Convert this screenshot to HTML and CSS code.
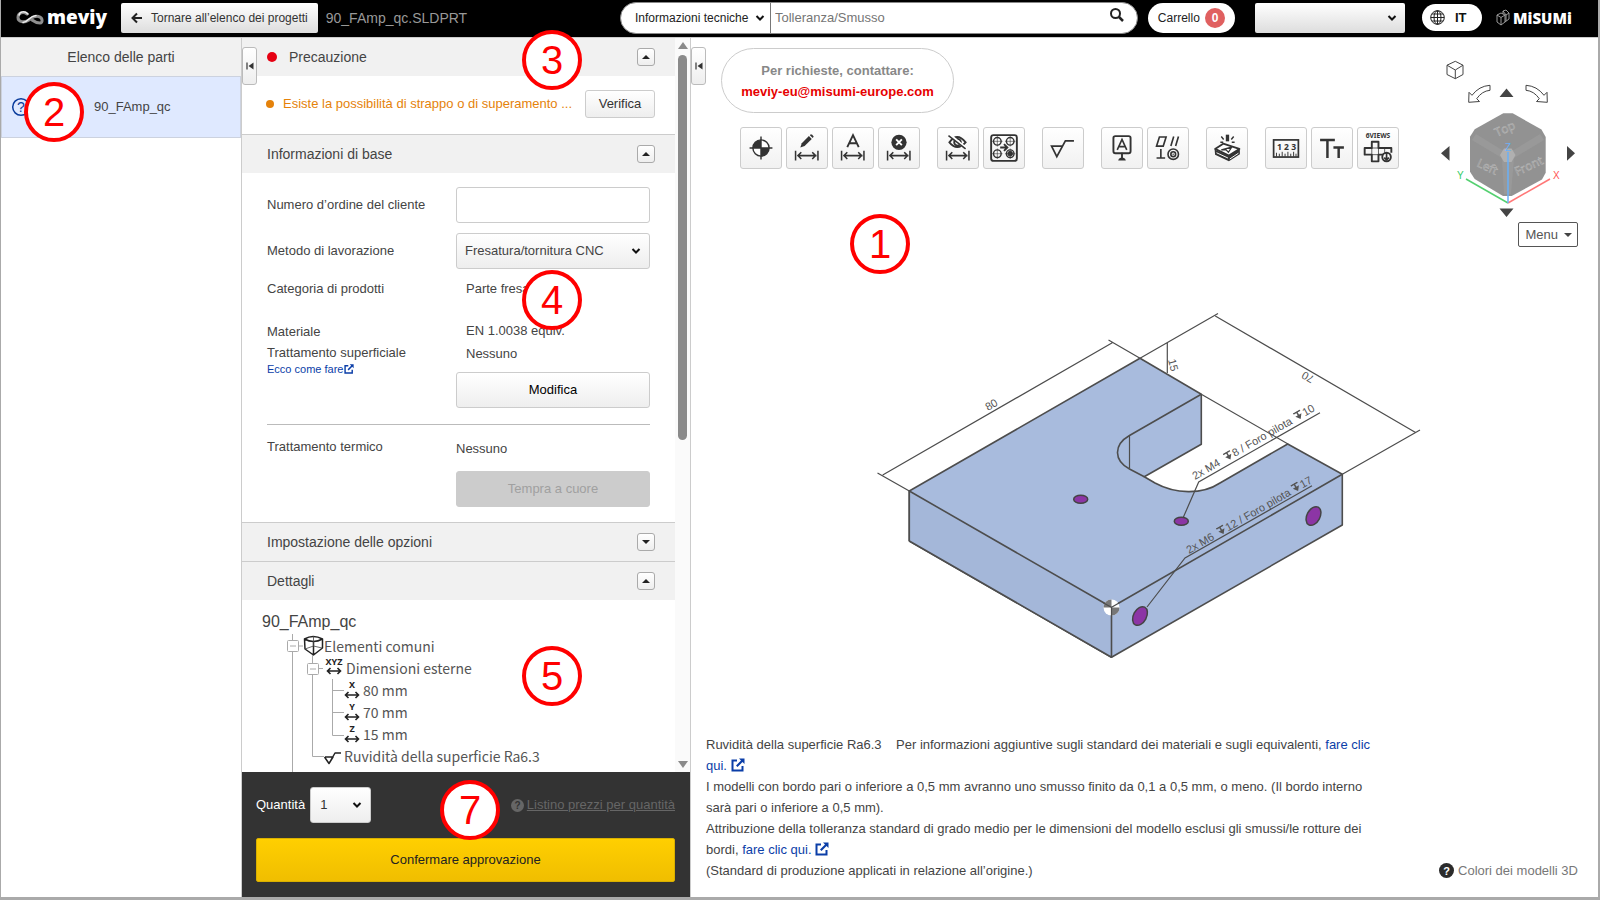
FILE: index.html
```html
<!DOCTYPE html>
<html lang="it">
<head>
<meta charset="utf-8">
<title>meviy – 90_FAmp_qc.SLDPRT</title>
<link rel="stylesheet" href="styles.css">
</head>
<body>
<svg class="defs" aria-hidden="true">
  <defs>
    <symbol id="ext" viewBox="0 0 14 14"><path d="M6 2.500H1.500V12.500H11.500V8" fill="none" stroke="currentColor" stroke-width="2"/><path d="M8 0.500H13.500V6L11.500 4L6.500 9L5 7.500L10 2.500Z" fill="currentColor"/></symbol>
    <symbol id="dim" viewBox="0 0 42 42"><path d="M9 24V34M32.500 24V34M11 29H31M15 25.500L11.500 29L15 32.500M26.500 25.500L30 29L26.500 32.500" fill="none" stroke="currentColor" stroke-width="1.600"/></symbol>
    <symbol id="span" viewBox="0 0 16 8"><path d="M1.500 4H14.500M4.500 1L1.500 4L4.500 7M11.500 1L14.500 4L11.500 7" fill="none" stroke="currentColor" stroke-width="1.600"/></symbol>
    <symbol id="collapse" viewBox="0 0 8 8"><path d="M1 0.500V7.500" stroke="currentColor" stroke-width="1.200"/><path d="M7.500 0.500V7.500L2.500 4Z" fill="currentColor"/></symbol>
    <symbol id="depth" viewBox="0 0 8 10"><path d="M0 1H8M4 1V6" stroke="currentColor" stroke-width="1.500"/><path d="M0.500 4.500H7.500L4 9Z" fill="currentColor"/></symbol>
  </defs>
</svg>

<header class="topbar">
  <a class="brand" href="#" aria-label="meviy">
    <svg width="29" height="16" viewBox="0 0 29 16" fill="none" stroke-linecap="round"><path d="M11 4C7 1 2 3 2 7.500S8 13 12 10.500S18 5.500 22.500 6.500S27 13 24 13S18 11.500 16 10" stroke="#8e8e8e" stroke-width="3"/><path d="M3 5C4 1 9 1 12 4M7 12.500C12 12.500 13 6 20 5.500" stroke="#eee" stroke-width="1.500"/></svg>
    <span>meviy</span>
  </a>
  <button class="back" type="button"><svg width="12" height="12" viewBox="0 0 12 12" fill="none" stroke="#222" stroke-width="2"><path d="M11 6H2M6 1.500L1.500 6L6 10.500"/></svg>Tornare all’elenco dei progetti</button>
  <span class="filename">90_FAmp_qc.SLDPRT</span>
  <form class="search">
    <select aria-label="Tipo di ricerca"><option>Informazioni tecniche</option></select>
    <input type="text" aria-label="Cerca" placeholder="Tolleranza/Smusso">
    <button type="button" aria-label="Cerca"><svg width="14" height="14" viewBox="0 0 14 14" fill="none" stroke="#222" stroke-width="2"><circle cx="5.500" cy="5.500" r="4.500"/><path d="M9 9L13 13" stroke-width="2.500"/></svg></button>
  </form>
  <button class="cart" type="button">Carrello <span>0</span></button>
  <select class="account" aria-label="Account"><option></option></select>
  <button class="lang" type="button"><svg width="15" height="15" viewBox="0 0 15 15" fill="none" stroke="#222"><circle cx="7.500" cy="7.500" r="6.800"/><ellipse cx="7.500" cy="7.500" rx="3.500" ry="6.800"/><path d="M7.500 0.700V14.300M0.700 7.500H14.300M2 4H13M2 11H13"/></svg>IT</button>
  <a class="misumi" href="#" aria-label="MiSUMi">
    <svg width="14" height="17" viewBox="0 0 14 17" fill="none" stroke="#aaa" stroke-width="0.900"><path d="M1 6L5 4L9 6V13L5 16L1 13ZM1 6L5 8.500L9 6M5 8.500V16M7 5V2L10 1L13 4V10L9 13M7 2L10 6L13 4M10 6V12"/></svg>
    <span>MiSUMi</span>
  </a>
</header>

<main class="workspace">
  <aside class="parts">
    <h2>Elenco delle parti</h2>
    <a class="part" href="#">
      <svg width="20" height="20" viewBox="0 0 20 20"><circle cx="10" cy="10" r="8.300" fill="none" stroke="#0a3c9c" stroke-width="1.500"/><text x="10" y="15" text-anchor="middle" class="help-glyph">?</text></svg>
      <span>90_FAmp_qc</span>
    </a>
    <b class="pin pin-2">2</b>
  </aside>

  <section class="panel">
    <button class="tab" type="button" aria-label="Comprimi elenco"><svg width="8" height="8"><use href="#collapse"/></svg></button>
    <div class="scroller">
      <div class="sections">
        <h2 class="bar alert"><span class="dot red"></span>Precauzione<button type="button" class="fold" aria-label="Comprimi"></button></h2>
        <div class="warning">
          <span class="dot orange"></span>
          <p>Esiste la possibilità di strappo o di superamento ...</p>
          <button type="button" class="btn small">Verifica</button>
        </div>
        <h2 class="bar">Informazioni di base<button type="button" class="fold" aria-label="Comprimi"></button></h2>
        <div class="form">
          <div class="row">
            <label for="order">Numero d’ordine del cliente</label>
            <input id="order" type="text">
          </div>
          <div class="row">
            <label for="method">Metodo di lavorazione</label>
            <select id="method"><option>Fresatura/tornitura CNC</option></select>
          </div>
          <div class="row">
            <span>Categoria di prodotti</span><span class="value">Parte fresata</span>
          </div>
          <div class="row top material">
            <div>
              <p>Materiale</p>
              <p>Trattamento superficiale</p>
              <a href="#">Ecco come fare<svg width="10" height="10"><use href="#ext"/></svg></a>
            </div>
            <div class="stack">
              <span class="value">EN 1.0038 equiv.</span>
              <span class="value">Nessuno</span>
              <button type="button" class="btn dark">Modifica</button>
            </div>
          </div>
          <hr>
          <div class="row top heat">
            <span>Trattamento termico</span>
            <div class="stack">
              <span>Nessuno</span>
              <button type="button" class="btn" disabled>Tempra a cuore</button>
            </div>
          </div>
        </div>
        <h2 class="bar">Impostazione delle opzioni<button type="button" class="fold down" aria-label="Espandi"></button></h2>
        <h2 class="bar">Dettagli<button type="button" class="fold" aria-label="Comprimi"></button></h2>
        <div class="tree">
          <h3>90_FAmp_qc</h3>
          <ul>
            <li><svg width="62" height="22" viewBox="0 0 62 22" fill="none"><path class="wire" d="M30.500 -1V140M36 11H41"/><rect class="wire box" x="25.500" y="5.500" width="11" height="11" rx="1"/><path class="wire" d="M28 11H34"/><path class="ink" d="M42.500 4Q51 -1 60.500 4V13L51.500 20L43 14ZM42.500 4Q47 6.500 51.500 6.500Q56 6.500 60.500 4M51.500 6.500V20"/><path class="fine" d="M51.500 1V11L43 14M51.500 11L60 13"/></svg>Elementi comuni</li>
            <li><svg width="84" height="22" viewBox="0 0 84 22" fill="none"><path class="wire" d="M50.500 -2V99.500M56 11.500H61"/><rect class="wire box" x="45.500" y="6.500" width="11" height="11" rx="1"/><path class="wire" d="M48 12H54"/><text x="72" y="8" text-anchor="middle" class="axis">XYZ</text><use href="#span" x="64" y="10" width="16" height="8"/></svg>Dimensioni esterne</li>
            <li><svg width="101" height="22" viewBox="0 0 101 22" fill="none"><path class="wire" d="M70.500 0V56.500M70.500 11.500H82"/><text x="90" y="9" text-anchor="middle" class="axis">X</text><use href="#span" x="82" y="12" width="16" height="8"/></svg>80 mm</li>
            <li><svg width="101" height="22" viewBox="0 0 101 22" fill="none"><path class="wire" d="M70.500 11.500H82"/><text x="90" y="9" text-anchor="middle" class="axis">Y</text><use href="#span" x="82" y="12" width="16" height="8"/></svg>70 mm</li>
            <li><svg width="101" height="22" viewBox="0 0 101 22" fill="none"><path class="wire" d="M70.500 12.500H82"/><text x="90" y="9" text-anchor="middle" class="axis">Z</text><use href="#span" x="82" y="12" width="16" height="8"/></svg>15 mm</li>
            <li><svg width="82" height="22" viewBox="0 0 82 22" fill="none"><path class="wire" d="M50.500 11.500H62"/><path class="ink" d="M63 12H71L67 18.500L62.500 12M67 18.500L73 8H79"/></svg>Ruvidità della superficie Ra6.3</li>
          </ul>
        </div>
      </div>
      <div class="scrollbar" aria-hidden="true"><i class="up"></i><i class="thumb"></i><i class="down"></i></div>
    </div>
    <footer class="order">
      <div class="qty">
        <label for="qty">Quantità</label>
        <select id="qty"><option>1</option></select>
        <a href="#"><svg width="13" height="13" viewBox="0 0 13 13"><circle cx="6.500" cy="6.500" r="6.500" fill="#666"/><text x="6.500" y="10" text-anchor="middle" class="q-dark">?</text></svg><span>Listino prezzi per quantità</span></a>
      </div>
      <button type="button" class="confirm">Confermare approvazione</button>
    </footer>
    <b class="pin pin-3">3</b>
    <b class="pin pin-4">4</b>
    <b class="pin pin-5">5</b>
    <b class="pin pin-7">7</b>
  </section>

  <section class="viewer">
    <svg class="model" viewBox="691 38 907 859" aria-label="Modello 3D">
      <path class="edge" fill="#a8bbdd" d="M1140 358.300L1201.300 394.300V444.300L1144.300 476.700L1155 483C1175 494 1202 495 1220 483L1287.700 444L1342.300 474.300V525L1111.500 657.300L909.300 541V491Z"/>
      <path fill="#a4b7d9" d="M909.300 491L1111.500 607.300V657.300L909.300 541Z"/>
      <path class="edge" fill="none" d="M909.300 541V491L1111.500 607.300L1342.300 474.300M1111.500 607.300V657.300L909.300 541M1201.300 394.300L1129.500 435.500C1113 445 1114 461 1129.500 469L1144.300 476.700"/>
      <path class="thin" d="M1129.500 435.500V468M1201.300 394.300L1288 444M882.700 475L1112.300 342.700M877.500 473L909.300 491M1108.500 340L1140 358.300M1140 358.300L1218 313.500M1215.300 316L1416 432.700M1342.300 474.300L1420 430M1167.300 342.700V373M1320 412.700L1198.700 482L1183 518M1312 485.700L1185 558L1147 607"/>
      <g class="hole"><ellipse cx="1080.700" cy="499.300" rx="7" ry="4"/><ellipse cx="1181.300" cy="521.300" rx="7" ry="4"/><ellipse cx="1140" cy="616" rx="6.500" ry="10" transform="rotate(28 1140 616)"/><ellipse cx="1313.500" cy="516" rx="6.500" ry="10" transform="rotate(28 1313.500 516)"/></g>
      <circle cx="1111.500" cy="607.500" r="8" fill="#fff"/><path fill="#777" d="M1111.500 607.500V599.500A8 8 0 0 0 1103.500 607.500ZM1111.500 607.500V615.500A8 8 0 0 0 1119.500 607.500Z"/>
      <path class="thin" d="M1103.500 603L1111.500 607.300L1119 603M1111.500 607V616"/>
      <g class="note-text">
        <text transform="translate(988 411) rotate(-30)">80</text>
        <text transform="translate(1315 377) rotate(210)">70</text>
        <text transform="translate(1168 360) rotate(75)">15</text>
        <g transform="translate(1195 480) rotate(-30)"><text>2x M4</text><use href="#depth" x="37" y="-9" width="8" height="10"/><text x="46">8 / Foro pilota</text><use href="#depth" x="118" y="-9" width="8" height="10"/><text x="127">10</text></g>
        <g transform="translate(1189 554) rotate(-30)"><text>2x M6</text><use href="#depth" x="36" y="-9" width="8" height="10"/><text x="45">12 / Foro pilota</text><use href="#depth" x="122" y="-9" width="8" height="10"/><text x="131">17</text></g>
      </g>
    </svg>
    <button class="tab" type="button" aria-label="Comprimi pannello"><svg width="8" height="8"><use href="#collapse"/></svg></button>
    <div class="contact">Per richieste, contattare:<a href="mailto:meviy-eu@misumi-europe.com">meviy-eu@misumi-europe.com</a></div>
    <div class="toolbar">
      <div class="group">
        <button type="button" aria-label="Origine"><svg viewBox="0 0 42 42"><circle cx="21" cy="21" r="8.500" fill="#fff" stroke="currentColor" stroke-width="1.500"/><path d="M21 21V12.500A8.500 8.500 0 0 0 12.500 21ZM21 21V29.500A8.500 8.500 0 0 0 29.500 21Z" fill="currentColor"/><path d="M21 9V33M9 21H33" stroke="currentColor" stroke-width="1.500"/></svg></button>
        <button type="button" aria-label="Modifica quota"><svg viewBox="0 0 42 42"><use href="#dim"/><path d="M14 20.500L15.500 16L23 8.500L26 11.500L18.500 19Z" fill="currentColor"/><path d="M24 7.500L25 6.500Q26.500 6.500 28 9L27 10.500Z" fill="currentColor"/></svg></button>
        <button type="button" aria-label="Testo quota"><svg viewBox="0 0 42 42"><use href="#dim"/><path d="M15 20L21 7.500L27 20M17 16H25" fill="none" stroke="currentColor" stroke-width="2"/></svg></button>
        <button type="button" aria-label="Elimina quota"><svg viewBox="0 0 42 42"><use href="#dim"/><circle cx="21" cy="15" r="8" fill="currentColor"/><path d="M18 12L24 18M24 12L18 18" stroke="#fff" stroke-width="2"/></svg></button>
      </div>
      <div class="group">
        <button type="button" aria-label="Nascondi quota"><svg viewBox="0 0 42 42"><use href="#dim"/><path d="M12 15Q20 4 29 15Q20 25 12 15Z" fill="none" stroke="currentColor" stroke-width="2"/><circle cx="20.500" cy="15" r="3.500" fill="none" stroke="currentColor" stroke-width="2"/><path d="M12 7L30 22" stroke="#fff" stroke-width="3"/><path d="M11 8L29 22" stroke="currentColor" stroke-width="1.600"/></svg></button>
        <button type="button" aria-label="Fori"><svg viewBox="0 0 42 42" fill="none" stroke="currentColor"><rect x="7.500" y="7.500" width="27" height="27" rx="2.500" stroke-width="2"/><g stroke-width="1.500"><circle cx="14" cy="14" r="4"/><circle cx="27.500" cy="14" r="4"/><circle cx="14" cy="27" r="4"/><circle cx="27.500" cy="27" r="4"/></g><circle cx="27.500" cy="27" r="2.500" fill="currentColor"/><path d="M14 8.500V19.500M8.500 14H19.500M27.500 8.500V19.500M22 14H33M14 21.500V32.500M8.500 27H19.500M27.500 21.500V32.500M22 27H33" stroke-width="0.600"/><path d="M17 20.500H24M21 17L24.500 20.500L21 24" stroke-width="2"/></svg></button>
      </div>
      <div class="group">
        <button type="button" aria-label="Rugosità"><svg viewBox="0 0 42 42"><path d="M21 19H9L14.500 30L23.500 13.500H32.500" fill="none" stroke="currentColor" stroke-width="1.800"/></svg></button>
      </div>
      <div class="group">
        <button type="button" aria-label="Riferimento"><svg viewBox="0 0 42 42"><rect x="12" y="8.500" width="18" height="18" rx="2" fill="none" stroke="currentColor" stroke-width="2"/><path d="M16 23L21 12L26 23M18 19.500H24" fill="none" stroke="currentColor" stroke-width="1.700"/><path d="M21 26V33" stroke="currentColor" stroke-width="2"/><path d="M17 34Q18 31 21 31Q24 31 25 34Z" fill="currentColor"/></svg></button>
        <button type="button" aria-label="Tolleranze geometriche"><svg viewBox="0 0 42 42" fill="none" stroke="currentColor" stroke-width="1.700"><path d="M9 19L12 9.500H19L16 19ZM24 19L27 9M29 19L32 9M9 31.500H18M13.500 22V31.500"/><circle cx="26.500" cy="27.500" r="5.500"/><circle cx="26.500" cy="27.500" r="2.500"/><path d="M26.500 27V28"/></svg></button>
      </div>
      <div class="group">
        <button type="button" aria-label="Marcatura"><svg viewBox="0 0 42 42"><path d="M8.500 22L17 16.500L34 22L23 29Z" fill="#fff" stroke="currentColor" stroke-width="2" stroke-linejoin="round"/><path d="M8 22.500L23 29.500V35L8.500 28ZM23 29.500L34.500 22V27.500L23 35Z" fill="currentColor"/><path d="M24 32.500L33 26.500M10 26L22 31.500" stroke="#fff"/><path d="M15 23L26 20L22.500 25.500L20 23Z" fill="none" stroke="currentColor" stroke-width="1.300"/><path d="M21.500 7V14" stroke="currentColor" stroke-width="3.500"/><path d="M15 9L17.500 12M14 15H17M28 9L25.500 12M29 15H26" stroke="currentColor" stroke-width="1.500"/></svg></button>
      </div>
      <div class="group">
        <button type="button" aria-label="Righello"><svg viewBox="0 0 42 42"><rect x="8" y="12.500" width="26" height="18" fill="none" stroke="currentColor" stroke-width="1.800"/><text x="21.500" y="23.500" text-anchor="middle" class="ruler-text">1 2 3</text><path d="M11 30V26M14 30V27M17 30V25M20 30V27M23 30V25M26 30V27M29 30V25M31.500 30V27" stroke="currentColor"/></svg></button>
        <button type="button" aria-label="Dimensione testo"><svg viewBox="0 0 42 42"><path d="M8.500 12.500H24M16.200 12V31.500M22.500 20.500H33.500M28 20.500V31.500" stroke="currentColor" stroke-width="2.600"/></svg></button>
        <button type="button" aria-label="6 viste"><svg viewBox="0 0 42 42" fill="none" stroke="currentColor"><text x="21" y="11" text-anchor="middle" class="views-text">6VIEWS</text><path d="M35 26V21H21.500V14.500H14.500V21H7V28H14.500V35H21.500V28H27" stroke-width="2" stroke-linejoin="round"/><path d="M14.500 21V28M21.500 28V21M14.500 21H21.500M14.500 28H21.500M28 21V26" stroke-width="0.800"/><circle cx="30" cy="30.500" r="4.500" fill="#fff" stroke-width="2"/><path d="M30 26V33M27.500 31L30 33.500L32.500 31" stroke-width="1.800"/></svg></button>
      </div>
    </div>
    <b class="pin pin-1">1</b>
    <div class="nav">
      <svg width="140" height="162" viewBox="1438 58 140 162">
        <g fill="#fff" stroke="#444"><path d="M1455.300 61.300L1463 65.200V74.500L1455.300 78.700L1447 74.500V65.200ZM1447 65.200L1455.300 70L1463 65.200M1455.300 70V78.700"/>
        <path id="spin" d="M1490 85.300V90.300Q1482 91 1476.700 98.700L1479.500 101.500L1468.700 102.300L1469 92.300L1472 95.300Q1479 86 1490 85.300Z"/><use href="#spin" transform="translate(3016 0) scale(-1 1)"/></g>
        <path fill="#444" d="M1499.500 97L1513.500 97L1506.500 88.500ZM1441 153.300L1449.500 146V160.700ZM1575 153.300L1567 146V160.700ZM1499.500 208.500H1513.500L1506.500 217Z"/>
        <path fill="#929292" d="M1503.300 113.300H1512.700L1541.500 129.500L1545.700 137V172.700L1542 179.500L1511.700 196H1503L1474.700 179L1470 171.700V136.700L1474.700 129.300Z"/>
        <path fill="#999" d="M1476 134L1502 150L1514 150L1540 134L1544 140L1514 158L1511 194H1504L1502 158L1472 140Z"/>
        <path fill="#b0b0b0" d="M1504 148.500H1511.500L1515.500 155L1511.500 162H1504L1500 155Z"/>
        <g class="cube-text"><text transform="translate(1497 137) rotate(-25)">Top</text><text transform="translate(1476 166) rotate(25)">Left</text><text transform="translate(1517 176) rotate(-25)">Front</text></g>
        <g fill="none" stroke-width="1.500"><path stroke="#54d070" d="M1508 203L1466 179"/><path stroke="#f77" d="M1508 203L1550 179"/><path stroke="#6ab0f7" d="M1508 203V152"/></g>
        <g class="axes"><text x="1457" y="179" fill="#3c6">Y</text><text x="1553" y="179" fill="#f55">X</text><text x="1505" y="151" fill="#6ab0f7">Z</text></g>
      </svg>
      <button type="button" class="menu">Menu<i></i></button>
    </div>
    <div class="notes">
      <div>
        <p>Ruvidità della superficie Ra6.3 &nbsp;&nbsp; Per informazioni aggiuntive sugli standard dei materiali e sugli equivalenti, <a href="#">fare clic qui. <svg width="14" height="14"><use href="#ext"/></svg></a></p>
        <p>I modelli con bordo pari o inferiore a 0,5 mm avranno uno smusso finito da 0,1 a 0,5 mm, o meno. (Il bordo interno sarà pari o inferiore a 0,5 mm).</p>
        <p>Attribuzione della tolleranza standard di grado medio per le dimensioni del modello esclusi gli smussi/le rotture dei bordi, <a href="#">fare clic qui. <svg width="14" height="14"><use href="#ext"/></svg></a></p>
        <p>(Standard di produzione applicati in relazione all’origine.)</p>
      </div>
      <a class="colors" href="#"><svg width="15" height="15" viewBox="0 0 15 15"><circle cx="7.500" cy="7.500" r="7.500" fill="#2b2b2b"/><text x="7.500" y="11.500" text-anchor="middle" class="q-light">?</text></svg>Colori dei modelli 3D</a>
    </div>
  </section>
</main>
</body>
</html>
```
FILE: styles.css
```css
* { box-sizing: border-box; }
body {
  margin: 0;
  height: 100vh;
  display: flex;
  flex-direction: column;
  overflow: hidden;
  background: #fff;
  border: solid #aaa;
  border-width: 0 2px 3px 1px;
  font: 13px/20px "Liberation Sans", Arial, sans-serif;
  color: #333;
}
.defs { position: absolute; width: 0; height: 0; }
h2, h3, p, ul { margin: 0; padding: 0; font-weight: 400; list-style: none; }
button, select, input { font: inherit; color: inherit; margin: 0; }
a { color: #0b3ea8; text-decoration: none; }
svg { flex: none; }
select {
  --chevron: url("data:image/svg+xml,%3Csvg xmlns='http://www.w3.org/2000/svg' width='10' height='8'%3E%3Cpath d='M1.500 2L5 5.500L8.500 2' fill='none' stroke='%23111' stroke-width='2'/%3E%3C/svg%3E") no-repeat right 8px center;
  appearance: none;
}

.topbar {
  display: flex;
  align-items: center;
  height: 38px;
  flex: none;
  padding: 0 28px 2px 15px;
  background: #000;
  border-bottom: 1px solid #ccc;
}
.brand { display: flex; align-items: center; width: 105px; gap: 2px; color: #fff; font: 800 19px/24px "Open Sans", sans-serif; }
.brand span { padding-bottom: 2px; }
.back {
  display: flex;
  align-items: center;
  gap: 8px;
  height: 30px;
  padding: 0 10px;
  border: 0;
  border-radius: 2px;
  background: linear-gradient(#fff, #ddd);
  font-size: 12px;
  white-space: nowrap;
}
.filename { margin: 0 auto 0 8px; font-size: 14px; color: #999; }
.search {
  display: flex;
  width: 518px;
  height: 32px;
  border: 1px solid #888;
  border-radius: 16px;
  background: #fff;
  overflow: hidden;
}
.search select { width: 150px; padding-left: 14px; border: 0; border-right: 1px solid #777; background: var(--chevron); background-position: right 5px center; color: #222; font-size: 12px; }
.search input { flex: 1; min-width: 0; border: 0; padding: 0 4px; background: none; }
.search input::placeholder { color: #757575; }
.search button { width: 40px; border: 0; background: none; }
.cart { width: 87px; height: 30px; margin-left: 10px; padding: 0; border: 0; border-radius: 15px; background: #fff; color: #222; font-size: 12px; }
.cart span { display: inline-block; width: 20px; margin-left: 2px; border-radius: 10px; background: #e06060; color: #fff; font-weight: 700; }
.account { width: 150px; height: 30px; margin: 0 17px 0 20px; padding: 0 6px; border: 0; border-radius: 2px; background: var(--chevron), linear-gradient(#fff, #ddd); }
.lang { display: flex; align-items: center; gap: 10px; width: 60px; height: 27px; padding: 0 8px; border: 0; border-radius: 14px; background: #fff; color: #111; font-weight: 700; }
.misumi { display: flex; align-items: center; gap: 3px; width: 74px; margin-left: 14px; color: #fff; font: 800 15px/20px "Open Sans", sans-serif; }

.workspace { flex: 1; min-height: 0; display: grid; grid-template-columns: 241px 449px minmax(0, 1fr); }
.parts { position: relative; border-right: 1px solid #ccc; }
.parts h2 { height: 38px; font-size: 14px; line-height: 38px; text-align: center; background: #f1f1f1; color: #444; }
.part { display: flex; align-items: center; gap: 63px; height: 62px; padding-left: 9px; border: 1px solid #ccd2df; background: #dfe9ff; color: #444; }
.help-glyph { font: 14px "Liberation Sans", sans-serif; fill: #0a3c9c; }

.panel { position: relative; display: flex; flex-direction: column; min-height: 0; border-right: 1px solid #ccc; }
.tab {
  position: absolute;
  z-index: 2;
  left: 0;
  top: 9px;
  width: 15px;
  height: 38px;
  padding: 0;
  border: 1px solid #bbb;
  border-radius: 3px;
  background: linear-gradient(#fff, #eee);
}
.scroller { flex: 1; min-height: 0; display: flex; overflow: hidden; }
.sections { flex: 1; overflow: hidden; }
.bar {
  display: flex;
  align-items: center;
  height: 39px;
  padding: 0 20px 0 25px;
  border-top: 1px solid #ccc;
  background: #f1f1f1;
  font-size: 14px;
  color: #444;
}
.bar.alert { height: 38px; border-top: 0; }
.bar .dot { margin-right: 12px; }
.fold { width: 18px; height: 18px; margin-left: auto; padding: 0; border: 1px solid #aaa; border-radius: 3px; background: linear-gradient(#fff, #eee); display: grid; place-items: center; }
.fold::before { content: ""; border: 4px solid transparent; border-top: 0; border-bottom: 4px solid #222; }
.fold.down::before { border-top: 4px solid #222; border-bottom: 0; }
.dot { width: 10px; height: 10px; border-radius: 5px; }
.red { background: #e60012; }
.orange { background: #e5820a; width: 8px; height: 8px; }
.warning { display: flex; align-items: center; height: 58px; padding: 0 20px 2px 24px; color: #e5820a; }
.warning p { flex: 1; padding-left: 9px; white-space: nowrap; }
.btn { height: 36px; width: 100%; border: 1px solid #ccc; border-radius: 3px; background: linear-gradient(#fff, #eee); }
.btn.small { width: 70px; height: 28px; padding: 0; color: #333; }
.btn.dark { color: #000; margin-top: 5px; }
.btn:disabled { margin-top: 12px; background: #ccc; color: #a0a0a0; }
.form { padding: 14px 25px 15px; color: #444; }
.row { display: grid; grid-template-columns: 189px 1fr; align-items: center; margin-bottom: 10px; }
.row input { height: 36px; min-width: 0; border: 1px solid #ccc; border-radius: 3px; }
.row select { height: 36px; min-width: 0; border: 1px solid #ccc; border-radius: 3px; padding: 0 8px; background: var(--chevron), linear-gradient(#fff, #eee); }
.row .value { padding-left: 10px; }
.row.top { align-items: start; }
.row.material { margin: 22px 0 16px; line-height: 21px; }
.row.material a { display: flex; align-items: center; gap: 1px; font-size: 11px; line-height: 12px; }
.stack { display: flex; flex-direction: column; gap: 3px; line-height: 20px; }
.row.heat { margin: 12px 0 0; }
.heat .stack { padding-top: 2px; gap: 0; }
hr { margin: 0; border: 0; border-top: 1px solid #bbb; }

.tree { padding: 9px 20px 0; }
.tree h3 { font-size: 16px; line-height: 26px; color: #444; }
.tree li { display: flex; align-items: center; height: 22px; font: 14px/22px "Noto Sans CJK JP", "Noto Sans", sans-serif; color: #555; white-space: nowrap; }
.tree svg { overflow: visible; color: #222; }
.wire { stroke: #aaa; }
.box { fill: #fff; }
.ink { stroke: #222; stroke-width: 1.500; stroke-linejoin: round; }
.fine { stroke: #444; stroke-width: 0.800; }
.axis { font: 700 9px "Noto Sans", sans-serif; fill: #222; }

.scrollbar { width: 15px; display: flex; flex-direction: column; align-items: center; padding: 4px 0; background: #fafafa; }
.scrollbar .up { border: 5px solid transparent; border-top: 0; border-bottom: 7px solid #8a8a8a; }
.thumb { width: 9px; height: 53%; margin: 6px 0 auto; border-radius: 5px; background: #8a8a8a; }
.scrollbar .down { border: 5px solid transparent; border-bottom: 0; border-top: 7px solid #8a8a8a; }

.order { padding: 15px 15px 15px 14px; background: #333; color: #fff; }
.qty { display: flex; align-items: center; margin-bottom: 15px; }
.qty select { width: 61px; height: 36px; margin-left: 5px; padding: 0 9px; border: 1px solid #ccc; border-radius: 3px; background: var(--chevron), linear-gradient(#fff, #eee); color: #333; }
.qty a { display: flex; align-items: center; gap: 3px; margin-left: auto; color: #666; }
.qty a span { text-decoration: underline; }
.q-dark { font: 700 10px "Liberation Sans", sans-serif; fill: #333; }
.q-light { font: 700 11px "Liberation Sans", sans-serif; fill: #fff; }
.confirm { display: block; width: 100%; height: 44px; border: 1px solid #d9b000; border-radius: 2px; background: linear-gradient(#ffcf00, #f0be00); color: #222; }

.viewer { position: relative; display: flex; flex-direction: column; align-items: flex-start; }
.model { position: absolute; inset: 0; width: 100%; height: 100%; }
.edge { stroke: #4d4d4d; stroke-width: 1.600; stroke-linejoin: round; }
.thin { fill: none; stroke: #4d4d4d; stroke-width: 1.200; }
.hole { fill: #8c35a5; stroke: #444; stroke-width: 1.500; }
.note-text { font: 11px "Liberation Sans", sans-serif; fill: #555; color: #555; }
.contact {
  position: relative;
  margin: 10px 0 14px 30px;
  width: 233px;
  padding: 11px 0 10px;
  border: 1px solid #ccc;
  border-radius: 33px;
  text-align: center;
  line-height: 21px;
  font-weight: 700;
  color: #888;
}
.contact a { display: block; color: #e60000; }
.toolbar { position: relative; display: flex; gap: 17px; margin-left: 49px; }
.group { display: flex; gap: 4px; }
.group button { width: 42px; height: 42px; padding: 0; border: 1px solid #ccc; border-radius: 3px; background: linear-gradient(#fff, #f1f1f1); color: #333; }
.group svg { display: block; width: 40px; height: 40px; }
.ruler-text { font: 700 9px "Noto Sans", sans-serif; fill: #333; stroke: none; }
.views-text { font: 700 7px "Noto Sans", sans-serif; fill: #333; stroke: none; }
.nav { position: absolute; top: 20px; right: 20px; display: flex; flex-direction: column; align-items: flex-end; gap: 2px; }
.cube-text { font: 12px "Open Sans", sans-serif; fill: #8a8a8a; stroke: #bbb; stroke-width: 0.500; }
.axes { font: 10px "Liberation Sans", sans-serif; }
.menu { display: flex; align-items: center; gap: 6px; height: 25px; padding: 0 5px 0 6px; border: 1px solid #555; border-radius: 2px; background: #fff; color: #555; }
.menu i { border: 4px solid transparent; border-bottom: 0; border-top: 4px solid #444; }
.notes { position: relative; display: flex; justify-content: space-between; align-items: flex-end; align-self: stretch; margin-top: auto; padding: 0 20px 16px 15px; line-height: 21px; color: #444; }
.notes > div { max-width: 676px; }
.notes p a svg { vertical-align: -2px; }
.colors { display: flex; align-items: center; gap: 4px; color: #777; }

.pin {
  position: absolute;
  z-index: 3;
  width: 60px;
  height: 60px;
  border: 4px solid #f00;
  border-radius: 50%;
  background: #fff;
  color: #f00;
  font: 400 40px/52px "Liberation Sans", Arial, sans-serif;
  text-align: center;
}
.pin-1 { left: 159px; top: 176px; }
.pin-2 { left: 23px; top: 44px; }
.pin-3 { left: 280px; top: -8px; }
.pin-4 { left: 280px; top: 232px; }
.pin-5 { left: 280px; top: 608px; }
.pin-7 { left: 198px; bottom: 57px; }
```
